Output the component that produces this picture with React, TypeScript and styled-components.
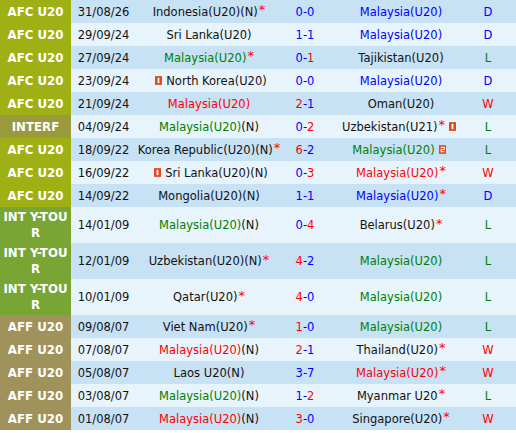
import React from 'react';
import styled, { createGlobalStyle } from 'styled-components';

type Tone = 'black' | 'green' | 'red' | 'blue';
type Comp = 'afc' | 'interf' | 'inty' | 'aff';

interface Team {
  name: string;
  tone: Tone;
  suffix?: string;
  star?: boolean;
  cardBefore?: number;
  cardAfter?: number;
}

interface Match {
  comp: Comp;
  label: string;
  date: string;
  home: Team;
  score: [string, string];
  win: 'h' | 'a' | null;
  away: Team;
  result: 'W' | 'D' | 'L';
}

const TONES: Record<Tone, string> = {
  black: '#111111',
  green: '#008000',
  red: '#ff0000',
  blue: '#0000ff',
};

const COMP_BG: Record<Comp, string> = {
  afc: '#9fb014',
  interf: '#9a9a3c',
  inty: '#79a534',
  aff: '#a0925b',
};

const RESULT_TONE: Record<Match['result'], Tone> = { W: 'red', D: 'blue', L: 'green' };

const MY = 'Malaysia(U20)';

const matches: Match[] = [
  { comp: 'afc', label: 'AFC U20', date: '31/08/26', home: { name: 'Indonesia(U20)(N)', tone: 'black', star: true }, score: ['0', '0'], win: null, away: { name: MY, tone: 'blue' }, result: 'D' },
  { comp: 'afc', label: 'AFC U20', date: '29/09/24', home: { name: 'Sri Lanka(U20)', tone: 'black' }, score: ['1', '1'], win: null, away: { name: MY, tone: 'blue' }, result: 'D' },
  { comp: 'afc', label: 'AFC U20', date: '27/09/24', home: { name: MY, tone: 'green', star: true }, score: ['0', '1'], win: 'a', away: { name: 'Tajikistan(U20)', tone: 'black' }, result: 'L' },
  { comp: 'afc', label: 'AFC U20', date: '23/09/24', home: { name: 'North Korea(U20)', tone: 'black', cardBefore: 1 }, score: ['0', '0'], win: null, away: { name: MY, tone: 'blue' }, result: 'D' },
  { comp: 'afc', label: 'AFC U20', date: '21/09/24', home: { name: MY, tone: 'red' }, score: ['2', '1'], win: 'h', away: { name: 'Oman(U20)', tone: 'black' }, result: 'W' },
  { comp: 'interf', label: 'INTERF', date: '04/09/24', home: { name: MY, tone: 'green', suffix: '(N)' }, score: ['0', '2'], win: 'a', away: { name: 'Uzbekistan(U21)', tone: 'black', star: true, cardAfter: 1 }, result: 'L' },
  { comp: 'afc', label: 'AFC U20', date: '18/09/22', home: { name: 'Korea Republic(U20)(N)', tone: 'black', star: true }, score: ['6', '2'], win: 'h', away: { name: MY, tone: 'green', cardAfter: 2 }, result: 'L' },
  { comp: 'afc', label: 'AFC U20', date: '16/09/22', home: { name: 'Sri Lanka(U20)(N)', tone: 'black', cardBefore: 1 }, score: ['0', '3'], win: 'a', away: { name: MY, tone: 'red', star: true }, result: 'W' },
  { comp: 'afc', label: 'AFC U20', date: '14/09/22', home: { name: 'Mongolia(U20)(N)', tone: 'black' }, score: ['1', '1'], win: null, away: { name: MY, tone: 'blue', star: true }, result: 'D' },
  { comp: 'inty', label: 'INT Y-TOUR', date: '14/01/09', home: { name: MY, tone: 'green', suffix: '(N)' }, score: ['0', '4'], win: 'a', away: { name: 'Belarus(U20)', tone: 'black', star: true }, result: 'L' },
  { comp: 'inty', label: 'INT Y-TOUR', date: '12/01/09', home: { name: 'Uzbekistan(U20)(N)', tone: 'black', star: true }, score: ['4', '2'], win: 'h', away: { name: MY, tone: 'green' }, result: 'L' },
  { comp: 'inty', label: 'INT Y-TOUR', date: '10/01/09', home: { name: 'Qatar(U20)', tone: 'black', star: true }, score: ['4', '0'], win: 'h', away: { name: MY, tone: 'green' }, result: 'L' },
  { comp: 'aff', label: 'AFF U20', date: '09/08/07', home: { name: 'Viet Nam(U20)', tone: 'black', star: true }, score: ['1', '0'], win: 'h', away: { name: MY, tone: 'green' }, result: 'L' },
  { comp: 'aff', label: 'AFF U20', date: '07/08/07', home: { name: MY, tone: 'red', suffix: '(N)' }, score: ['2', '1'], win: 'h', away: { name: 'Thailand(U20)', tone: 'black', star: true }, result: 'W' },
  { comp: 'aff', label: 'AFF U20', date: '05/08/07', home: { name: 'Laos U20(N)', tone: 'black' }, score: ['3', '7'], win: null, away: { name: MY, tone: 'red', star: true }, result: 'W' },
  { comp: 'aff', label: 'AFF U20', date: '03/08/07', home: { name: MY, tone: 'green', suffix: '(N)' }, score: ['1', '2'], win: 'a', away: { name: 'Myanmar U20', tone: 'black', star: true }, result: 'L' },
  { comp: 'aff', label: 'AFF U20', date: '01/08/07', home: { name: MY, tone: 'red', suffix: '(N)' }, score: ['3', '0'], win: 'h', away: { name: 'Singapore(U20)', tone: 'black', star: true }, result: 'W' },
];

const GlobalStyle = createGlobalStyle`
  html, body {
    margin: 0;
    padding: 0;
    background: #ffffff;
  }
  body {
    font-family: "DejaVu Sans", Verdana, sans-serif;
  }
`;

/* red card count badge */
const Card: React.FC<{ count: number }> = ({ count }) => (
  <CardIcon viewBox="0 0 8 10" aria-hidden>
    <rect x="0" y="0" width="8" height="10" fill="#e4481b" />
    {count === 1 ? (
      <rect x="3" y="2" width="2" height="6" fill="#ffffff" />
    ) : (
      <path d="M2 2.5 H6 V5 H2.5 V7.5 H6" fill="none" stroke="#ffffff" strokeWidth="1.3" />
    )}
  </CardIcon>
);

const TeamName: React.FC<{ team: Team }> = ({ team }) => (
  <>
    {team.cardBefore ? <Card count={team.cardBefore} /> : null}
    <Txt $tone={team.tone}>{team.name}</Txt>
    {team.suffix ? <Txt $tone="black">{team.suffix}</Txt> : null}
    {team.star ? <Star>*</Star> : null}
    {team.cardAfter ? <Card count={team.cardAfter} /> : null}
  </>
);

const App: React.FC = () => (
  <>
    <GlobalStyle />
    <Table>
      {matches.map((m, i) => (
        <Row key={i} $alt={i % 2 === 1}>
          <CompCell $bg={COMP_BG[m.comp]}>{m.label}</CompCell>
          <Cell>{m.date}</Cell>
          <Cell>
            <TeamName team={m.home} />
          </Cell>
          <Cell>
            <Txt $tone={m.win === 'h' ? 'red' : 'blue'}>{m.score[0]}</Txt>
            <Txt $tone="blue">-</Txt>
            <Txt $tone={m.win === 'a' ? 'red' : 'blue'}>{m.score[1]}</Txt>
          </Cell>
          <Cell>
            <TeamName team={m.away} />
          </Cell>
          <ResultCell>
            <Txt $tone={RESULT_TONE[m.result]}>{m.result}</Txt>
          </ResultCell>
        </Row>
      ))}
    </Table>
  </>
);

export default App;

/* ── Styles ───────────────────────────────────────── */

const Table = styled.div`
  width: 516px;
  display: flex;
  flex-direction: column;
`;

const Row = styled.div<{ $alt: boolean }>`
  display: grid;
  grid-template-columns: 71px 65px 146px 46px 146px 1fr;
  min-height: 23px;
  background: ${({ $alt }) => ($alt ? '#e8f4fc' : '#c7e1f5')};
`;

const Cell = styled.div`
  display: flex;
  align-items: center;
  justify-content: center;
  white-space: nowrap;
  font-size: 11.5px;
  color: #111111;
`;

const CompCell = styled.div<{ $bg: string }>`
  display: flex;
  align-items: center;
  justify-content: center;
  text-align: center;
  padding: 2px 0;
  background: ${({ $bg }) => $bg};
  color: #ffffff;
  font-weight: bold;
  font-size: 11.8px;
  line-height: 16px;
  word-break: break-all;
`;

const ResultCell = styled(Cell)`
  padding-right: 14px;
`;

const Txt = styled.span<{ $tone: Tone }>`
  color: ${({ $tone }) => TONES[$tone]};
`;

const Star = styled.span`
  color: #ff0000;
  font-size: 13px;
  margin-left: 1px;
  position: relative;
  top: -2px;
`;

const CardIcon = styled.svg`
  width: 7px;
  height: 9px;
  margin: 0 4px;
  flex-shrink: 0;
`;
